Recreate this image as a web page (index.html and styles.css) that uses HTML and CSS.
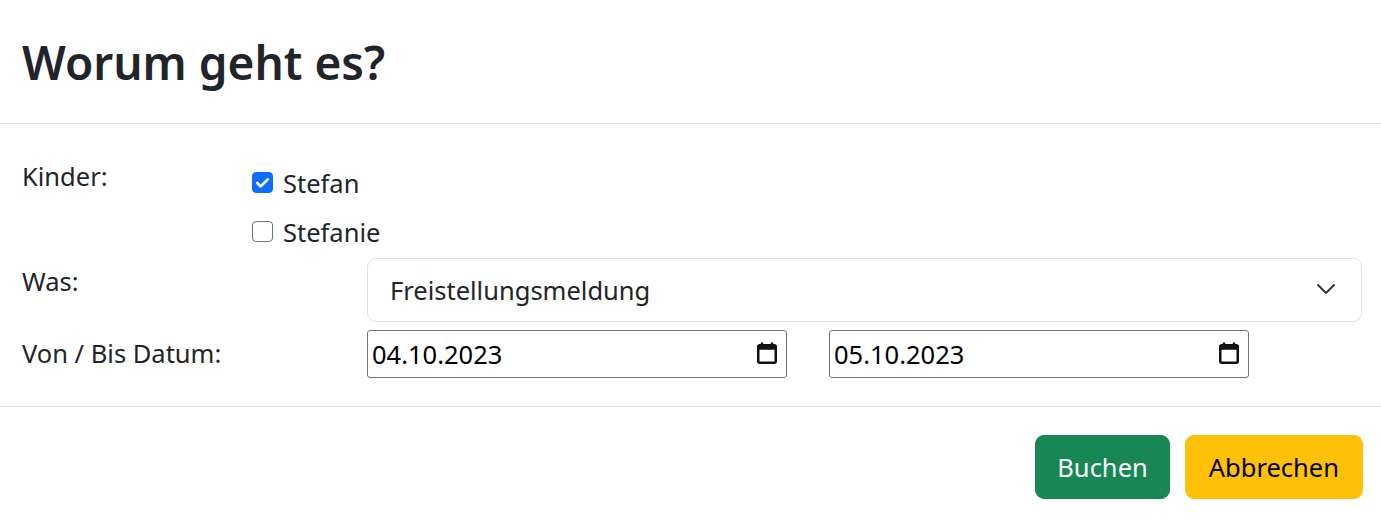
FILE: index.html
```html
<!DOCTYPE html>
<html lang="de">
<head>
<meta charset="utf-8">
<title>Worum geht es?</title>
<link rel="stylesheet" href="styles.css">
</head>
<body>
<div class="modal">
  <div class="modal-header">
    <h1 class="modal-title">Worum geht es?</h1>
  </div>
  <div class="modal-body">
    <div class="row row-kinder">
      <div class="label">Kinder:</div>
      <div class="checks">
        <div class="check">
          <span class="box checked"><svg viewBox="0 0 20 20" width="21" height="21"><path d="M5 10.5l3.2 3.2L15 7" fill="none" stroke="#fff" stroke-width="2.6" stroke-linecap="round" stroke-linejoin="round"/></svg></span>
          <span class="check-label">Stefan</span>
        </div>
        <div class="check">
          <span class="box"></span>
          <span class="check-label">Stefanie</span>
        </div>
      </div>
    </div>
    <div class="row row-was">
      <div class="label label-offset">Was:</div>
      <div class="select">
        <span>Freistellungsmeldung</span>
        <svg class="chevron" viewBox="0 0 18 10" width="18" height="10"><path d="M1 1l8 8 8-8" fill="none" stroke="#343a40" stroke-width="2" stroke-linecap="round" stroke-linejoin="round"/></svg>
      </div>
    </div>
    <div class="row row-date">
      <div class="label label-offset">Von / Bis Datum:</div>
      <div class="dates">
        <div class="date">
          <span>04.10.2023</span>
          <svg class="cal" viewBox="0 0 20 22" width="20" height="22"><path d="M5 0.5v3M15 0.5v3" stroke="#111" stroke-width="2.4"/><rect x="1.25" y="3.25" width="17.5" height="17.5" rx="1.5" fill="none" stroke="#111" stroke-width="2.5"/><rect x="1.25" y="3.25" width="17.5" height="4.5" fill="#111"/></svg>
        </div>
        <div class="date">
          <span>05.10.2023</span>
          <svg class="cal" viewBox="0 0 20 22" width="20" height="22"><path d="M5 0.5v3M15 0.5v3" stroke="#111" stroke-width="2.4"/><rect x="1.25" y="3.25" width="17.5" height="17.5" rx="1.5" fill="none" stroke="#111" stroke-width="2.5"/><rect x="1.25" y="3.25" width="17.5" height="4.5" fill="#111"/></svg>
        </div>
      </div>
    </div>
  </div>
  <div class="modal-footer">
    <button class="btn btn-success">Buchen</button>
    <button class="btn btn-warning">Abbrechen</button>
  </div>
</div>
</body>
</html>
```
FILE: styles.css
```css
html, body {
  margin: 0;
  padding: 0;
  background: #fff;
}
body {
  font-family: "Noto Sans", "Open Sans", sans-serif;
  color: #212529;
  font-size: 25.5px;
  line-height: 36px;
}
.modal {
  width: 1381px;
}
.modal-header {
  height: 124px;
  box-sizing: border-box;
  border-bottom: 1px solid #dee2e6;
  padding: 0 19px 0 22px;
  display: flex;
  align-items: center;
}
.modal-title {
  margin: 0;
  font-size: 46px;
  font-weight: 600;
  line-height: 60px;
  color: #212529;
}
.modal-body {
  padding: 34px 19px 28px 22px;
  border-bottom: 1px solid #dee2e6;
  display: flex;
  flex-direction: column;
  gap: 8px;
}
.row {
  display: grid;
  grid-template-columns: 345px 1fr;
}
.row-kinder {
  grid-template-columns: 230px 1fr;
  margin-bottom: -6px;
}
.label {
  line-height: 36px;
}
.label-offset {
  padding-top: 5px;
}
.checks {
  display: flex;
  flex-direction: column;
}
.check {
  height: 49px;
  display: flex;
  align-items: center;
}
.box {
  width: 21px;
  height: 21px;
  box-sizing: border-box;
  border: 1.5px solid #6c757d;
  border-radius: 4px;
  margin-right: 10px;
  display: inline-flex;
  background: #fff;
}
.box.checked {
  background: #0d6efd;
  border-color: #0d6efd;
}
.box.checked svg {
  margin: -1.5px;
}
.select {
  height: 64px;
  box-sizing: border-box;
  border: 1px solid #dee2e6;
  border-radius: 9px;
  padding: 0 26px 0 22px;
  display: flex;
  align-items: center;
  justify-content: space-between;
}
.chevron {
  margin-top: -2px;
}
.dates {
  display: flex;
  gap: 42px;
}
.date {
  width: 420px;
  height: 48px;
  box-sizing: border-box;
  border: 1px solid #767676;
  border-radius: 3px;
  padding: 0 9px 0 4px;
  display: flex;
  align-items: center;
  justify-content: space-between;
  color: #000;
}
.cal {
  margin-top: -2px;
}
.modal-footer {
  padding: 28px 18px 0 22px;
  display: flex;
  justify-content: flex-end;
  gap: 15px;
}
.btn {
  font-family: inherit;
  font-size: 25.5px;
  line-height: 36px;
  height: 64px;
  padding: 0 21px;
  border: 1px solid transparent;
  border-radius: 9px;
  cursor: pointer;
}
.btn-warning {
  padding: 0 23px;
}
.btn-success {
  background: #198754;
  border-color: #198754;
  color: #fff;
}
.btn-warning {
  background: #ffc107;
  border-color: #ffc107;
  color: #000;
}
```
